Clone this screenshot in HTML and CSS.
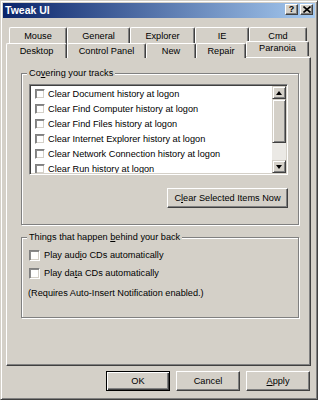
FILE: index.html
```html
<!DOCTYPE html>
<html lang="en">
<head>
	<meta charset="UTF-8">
	<title>Tweak UI</title>
	<link rel="stylesheet" href="styles.css">
</head>
<body>
	<div id="window">
		<div class="titlebar">
			<span class="title">Tweak UI</span>
			<span class="cap-btn help">?</span>
			<span class="cap-btn close"><svg width="8" height="7" viewBox="0 0 8 7"><path d="M0.5 0.5 L7.5 6.5 M7.5 0.5 L0.5 6.5" stroke="#000" stroke-width="1.6" fill="none"/></svg></span>
		</div>

		<div class="content">
			<div class="tabs">
				<div class="tab-row back">
					<span class="tab t-mouse">Mouse</span>
					<span class="tab t-general">General</span>
					<span class="tab t-explorer">Explorer</span>
					<span class="tab t-ie">IE</span>
					<span class="tab t-cmd">Cmd</span>
				</div>
				<div class="tab-row front">
					<span class="tab t-desktop">Desktop</span>
					<span class="tab t-cpanel">Control Panel</span>
					<span class="tab t-new">New</span>
					<span class="tab t-repair">Repair</span>
					<span class="tab t-paranoia active">Paranoia</span>
				</div>
			</div>

			<div class="panel">
				<div class="group tracks">
					<span class="group-title">Co<u>v</u>ering your tracks</span>
					<div class="listbox">
						<ul class="items">
							<li><i class="check"></i>Clear Document history at logon</li>
							<li><i class="check"></i>Clear Find Computer history at logon</li>
							<li><i class="check"></i>Clear Find Files history at logon</li>
							<li><i class="check"></i>Clear Internet Explorer history at logon</li>
							<li><i class="check"></i>Clear Network Connection history at logon</li>
							<li><i class="check"></i>Clear Run history at logon</li>
						</ul>
						<div class="scrollbar">
							<span class="sb-btn"><i class="arrow up"></i></span>
							<span class="sb-thumb"></span>
							<span class="sb-track"></span>
							<span class="sb-btn"><i class="arrow down"></i></span>
						</div>
					</div>
					<div class="group-actions">
						<span class="button wide">C<u>l</u>ear Selected Items Now</span>
					</div>
				</div>

				<div class="group behind">
					<span class="group-title">Things that happen <u>b</u>ehind your back</span>
					<div class="opt"><i class="check"></i>Play aud<u>i</u>o CDs automatically</div>
					<div class="opt"><i class="check"></i>Play da<u>t</u>a CDs automatically</div>
					<div class="note">(Requires Auto-Insert Notification enabled.)</div>
				</div>
			</div>

			<div class="buttons">
				<span class="button default">OK</span>
				<span class="button">Cancel</span>
				<span class="button"><u>A</u>pply</span>
			</div>
		</div>
	</div>
</body>
</html>
```
FILE: styles.css
```css
body { margin:0;background:#d4d0c8;font-family:"Liberation Sans",Arial,sans-serif;font-size:9.2px;color:#000; }
ul { margin:0;padding:0;list-style:none; }
u { text-decoration-thickness:1px;text-underline-offset:1px; }

#window { box-sizing:border-box;width:318px;height:400px;padding:1px;background:#d4d0c8;border:1px solid;border-color:#d4d0c8 #404040 #404040 #d4d0c8;box-shadow:inset 1px 1px #fff,inset -1px -1px #808080; }

.titlebar { display:flex;align-items:flex-start;height:15px;margin:1px 1px 0 1px;background:linear-gradient(to right,#0a246a,#a6caf0); }
.title { flex:1;padding-left:2px;line-height:15px;color:#fff;font-weight:bold;font-size:10.5px; }
.cap-btn { box-sizing:border-box;display:flex;align-items:center;justify-content:center;width:13px;height:11px;margin-top:1px;background:#d4d0c8;border:1px solid;border-color:#fff #404040 #404040 #fff;box-shadow:inset -1px -1px #808080;font-weight:bold;font-size:9px;line-height:9px; }
.cap-btn.close { margin-left:2px;margin-right:2px; }

.content { padding:9px 5px 0 4px; }

/* tabs */
.tabs { height:30px; }
.tab-row { display:flex; }
.tab-row.back { height:16px;margin-left:3px; }
.tab-row.front { height:14px; }
.tab { box-sizing:border-box;display:flex;align-items:center;justify-content:center;height:100%;border:1px solid;border-bottom:0;border-color:#fff #404040 #404040 #fff;border-radius:2px 2px 0 0;box-shadow:inset -1px 0 #808080;background:#d4d0c8; }
.tab-row.back .tab { height:17px; }
.tab-row.front .tab { height:15px; }
.tab.active { position:relative;z-index:1;height:17px;margin-top:-2px;padding-bottom:3px; }
.t-mouse { width:58px; }
.t-general { width:63px; }
.t-explorer { width:65px; }
.t-ie { width:54px; }
.t-cmd { width:58px; }
.t-desktop { width:61px; }
.t-cpanel { width:79px; }
.t-new { width:50px; }
.t-repair { width:50px; }
.t-paranoia { width:63px; }

.panel { box-sizing:border-box;height:309px;padding:15px 11px 0 14px;border:1px solid;border-color:#fff #404040 #404040 #fff;box-shadow:inset -1px -1px #808080; }

/* group boxes */
.group { position:relative;border:1px solid #808080;box-shadow:inset 1px 1px #fff,1px 1px #fff; }
.group-title { position:absolute;top:-6px;left:5px;padding:0 2px;background:#d4d0c8;line-height:11px; }
.tracks { height:140px;padding:10px 0 0 7px; }
.behind { height:71px;margin-top:12px;padding:8px 0 0 7px; }

.listbox { box-sizing:border-box;display:flex;width:259px;height:91px;background:#fff;border:1px solid;border-color:#808080 #fff #fff #808080;box-shadow:inset 1px 1px #404040,inset -1px -1px #d4d0c8;padding:1px; }
.items { flex:1;overflow:hidden; }
.items li { display:flex;align-items:center;height:15px;padding-left:4px;white-space:nowrap; }

.check { box-sizing:border-box;display:inline-block;width:10px;height:10px;margin-right:3px;background:#fff;border:1px solid;border-color:#808080 #fff #fff #808080;box-shadow:inset 1px 1px #8a8a8a,inset -1px -1px #d4d0c8; }

.scrollbar { display:flex;flex-direction:column;width:14px; }
.sb-btn,.sb-thumb { box-sizing:border-box;display:flex;align-items:center;justify-content:center;background:#d4d0c8;border:1px solid;border-color:#d4d0c8 #404040 #404040 #d4d0c8;box-shadow:inset 1px 1px #fff,inset -1px -1px #808080; }
.sb-btn { height:13px; }
.sb-thumb { height:44px; }
.sb-track { flex:1;background:#ebe9e5; }
.arrow { width:0;height:0;border-left:3px solid transparent;border-right:3px solid transparent; }
.arrow.up { border-bottom:4px solid #000; }
.arrow.down { border-top:4px solid #000; }

.group-actions { display:flex;justify-content:flex-end;width:259px;margin-top:13px; }

/* push buttons */
.button { box-sizing:border-box;display:flex;align-items:center;justify-content:center;width:64px;height:20px;background:#d4d0c8;border:1px solid;border-color:#fff #404040 #404040 #fff;box-shadow:inset -1px -1px #808080; }
.button.wide { width:121px; }
.button.default { border-color:#000;box-shadow:inset 1px 1px #fff,inset -1px -1px #404040,inset -2px -2px #808080; }

.opt { display:flex;align-items:center;height:18px; }
.opt .check { width:11px;height:11px;margin-right:4px; }
.note { height:18px;line-height:18px;margin-top:2px;margin-left:-1px; }

.buttons { display:flex;justify-content:flex-end;gap:6px;margin-top:5px;padding-right:1px; }
```
